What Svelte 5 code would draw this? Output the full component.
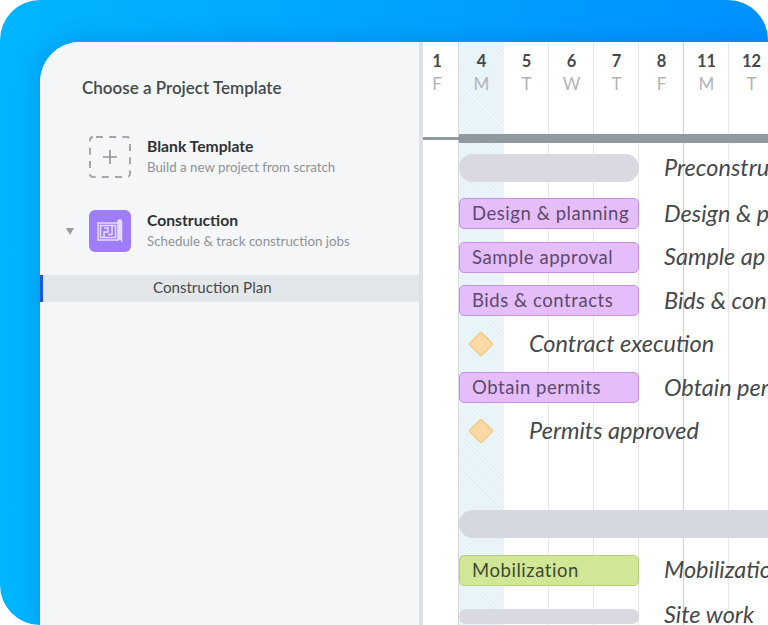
<script>
  const days = [
    { n: '1', d: 'F', first: true },
    { n: '4', d: 'M', today: true },
    { n: '5', d: 'T' },
    { n: '6', d: 'W' },
    { n: '7', d: 'T' },
    { n: '8', d: 'F' },
    { n: '11', d: 'M' },
    { n: '12', d: 'T' }
  ]

  const rows = [
    { type: 'group', label: 'Preconstru' },
    { type: 'task', color: 'purple', name: 'Design & planning', label: 'Design & p' },
    { type: 'task', color: 'purple', name: 'Sample approval', label: 'Sample ap' },
    { type: 'task', color: 'purple', name: 'Bids & contracts', label: 'Bids & con' },
    { type: 'milestone', label: 'Contract execution' },
    { type: 'task', color: 'purple', name: 'Obtain permits', label: 'Obtain per' },
    { type: 'milestone', label: 'Permits approved' },
    { type: 'empty' },
    { type: 'wide' },
    { type: 'task', color: 'green', name: 'Mobilization', label: 'Mobilizatio' },
    { type: 'site', label: 'Site work' }
  ]
</script>

<div class="page">
  <div class="frame">
    <div class="window">
      <aside class="sidebar">
        <h1>Choose a Project Template</h1>

        <div class="template blank">
          <span class="tile">
            <svg width="42" height="42" viewBox="0 0 42 42" fill="none" stroke="#a3a7ab">
              <rect x="1" y="1" width="40" height="40" rx="3" stroke-width="2" stroke-dasharray="7 6.2" stroke-dashoffset="-3" />
              <path d="M21 14v14M14 21h14" stroke-width="1.6" stroke="#8e9296" />
            </svg>
          </span>
          <div class="info">
            <div class="name">Blank Template</div>
            <div class="desc">Build a new project from scratch</div>
          </div>
        </div>

        <div class="template">
          <span class="caret"></span>
          <span class="tile tile-purple">
            <svg width="42" height="42" viewBox="0 0 42 42" fill="none" stroke="#e6dcff" stroke-width="1.6">
              <path d="M9 13h20v17H9zM11.500 15.500h15v12h-15z" />
              <path d="M15 27v-5h4v-4h-4M23 15.500v9h-4" />
              <path d="M29 13v-1.500c0-2 3.500-2 3.500 0V30c-1-1.600-2.500-1.500-3.500 0" fill="#e6dcff" />
            </svg>
          </span>
          <div class="info">
            <div class="name">Construction</div>
            <div class="desc">Schedule &amp; track construction jobs</div>
          </div>
        </div>

        <div class="selected">Construction Plan</div>
      </aside>

      <section class="gantt">
        <div class="columns">
          {#each days as day}
            <div class="col" class:today={day.today} class:first={day.first}></div>
          {/each}
        </div>

        <header class="days">
          {#each days as day}
            <div class="day" class:first={day.first}>
              <b>{day.n}</b>
              <span>{day.d}</span>
            </div>
          {/each}
        </header>

        <div class="rule"><div class="rule-thin"></div><div class="rule-thick"></div></div>

        <div class="rows">
          {#each rows as row}
            <div class="row {row.type}">
              {#if row.type === 'group'}
                <div class="bar pill"></div>
                <em>{row.label}</em>
              {:else if row.type === 'task'}
                <div class="bar {row.color}">{row.name}</div>
                <em>{row.label}</em>
              {:else if row.type === 'milestone'}
                <span class="diamond"></span>
                <em class="near">{row.label}</em>
              {:else if row.type === 'wide'}
                <div class="bar pill stretch"></div>
              {:else if row.type === 'site'}
                <div class="bar pill short"></div>
                <em>{row.label}</em>
              {/if}
            </div>
          {/each}
        </div>
      </section>
    </div>
  </div>
</div>

<style>
  :global(body) {
    margin: 0;
    background: #fff;
  }

  .page {
    width: 768px;
    height: 625px;
    overflow: hidden;
    font-family: Lato, "Open Sans", sans-serif;
  }

  .frame {
    height: 100%;
    box-sizing: border-box;
    padding: 42px 0 0 40px;
    border-radius: 40px 40px 0 40px;
    background: linear-gradient(90deg, #00b5ff 0%, #00a8ff 40%, #0091ff 100%);
  }

  .window {
    display: flex;
    height: 583px;
    background: #fff;
    border-radius: 40px 0 0 0;
    overflow: hidden;
    box-shadow: 0 0 24px rgba(0, 70, 170, 0.28);
  }

  .sidebar {
    width: 379px;
    flex: none;
    background: #f4f6f8;
    border-right: 4px solid #dfe1e2;
  }

  h1 {
    margin: 36px 0 0 42px;
    font-size: 17px;
    line-height: 20px;
    font-weight: 600;
    color: #45494c;
  }

  .template {
    position: relative;
    display: flex;
    align-items: center;
    gap: 16px;
    margin: 0 0 0 49px;
    height: 42px;
  }

  .blank {
    margin-top: 38px;
    margin-bottom: 32px;
  }

  .tile {
    display: block;
    width: 42px;
    height: 42px;
    flex: none;
  }

  .tile-purple {
    background: #a07df8;
    border-radius: 6px;
  }

  .caret {
    position: absolute;
    left: -23px;
    top: 18px;
    border: 4.500px solid transparent;
    border-top: 7px solid #9a9da0;
    border-bottom: 0;
  }

  .info {
    margin-top: -3px;
  }

  .name {
    font-size: 15.700px;
    line-height: 18px;
    font-weight: 700;
    color: #2e3235;
  }

  .desc {
    margin-top: 4px;
    font-size: 13.300px;
    line-height: 16px;
    color: #8f9397;
  }

  .selected {
    margin-top: 23px;
    height: 27px;
    box-sizing: border-box;
    padding-left: 110px;
    line-height: 25px;
    font-size: 15.100px;
    color: #45494c;
    background: #e4e7e9;
    border-left: 3px solid #2156d9;
  }

  .gantt {
    position: relative;
    flex: 1;
    min-width: 0;
    overflow: hidden;
  }

  .columns {
    position: absolute;
    inset: 0;
    display: flex;
  }

  .col {
    width: 45px;
    flex: none;
    box-sizing: border-box;
    border-right: 1px solid #e6e8ea;
  }

  .col.first {
    width: 36px;
    border-right-color: #d5d9dc;
  }

  .col.today {
    background: repeating-linear-gradient(45deg, #e4f1f7 0 1.500px, #edf6fa 1.500px 3px);
    border-right: 0;
  }

  .col:nth-child(6) {
    border-right-color: #cdd1d4;
  }

  .days {
    position: relative;
    display: flex;
    height: 92px;
  }

  .day {
    width: 45px;
    flex: none;
    padding-top: 9px;
    text-align: center;
    box-sizing: border-box;
  }

  .day.first {
    width: 28px;
    margin-right: 8px;
  }

  .day b {
    display: block;
    font-size: 16.500px;
    line-height: 20px;
    font-weight: 700;
    color: #45494c;
  }

  .day span {
    display: block;
    margin-top: 3px;
    font-size: 17px;
    line-height: 20px;
    color: #b0b4b7;
  }

  .rule {
    position: relative;
    display: flex;
    align-items: center;
    height: 9px;
  }

  .rule-thin {
    width: 36px;
    height: 3px;
    background: #8f999f;
  }

  .rule-thick {
    flex: 1;
    height: 9px;
    background: #8f999f;
  }

  .rows {
    position: relative;
    padding: 3px 0 0 36px;
  }

  .row {
    display: flex;
    align-items: center;
    height: 43.500px;
    white-space: nowrap;
  }

  .row.group {
    margin-bottom: 2.500px;
  }

  .row.wide {
    margin-top: 6px;
    margin-bottom: 2.500px;
  }

  .row.site {
    margin-top: 1px;
  }

  .bar {
    width: 180px;
    flex: none;
    box-sizing: border-box;
    height: 31px;
    padding-left: 12px;
    line-height: 29px;
    font-size: 18.500px;
    border-radius: 5px;
    letter-spacing: 0.55px;
    color: #5b4a6a;
  }

  .purple {
    background: #e6bdfb;
    border: 1px solid #c68fe0;
  }

  .green {
    background: #d1e795;
    border: 1px solid #b3d07b;
    color: #3f4a35;
  }

  .pill {
    height: 28px;
    border-radius: 14px;
    background: #d8d9e1;
  }

  .stretch {
    width: 320px;
    border-radius: 14px 0 0 14px;
    background: #d5d8e1;
  }

  .short {
    height: 15px;
    margin-top: 3px;
    border-radius: 7px;
  }

  em {
    margin-left: 25px;
    margin-top: -2px;
    font-size: 23.500px;
    font-style: italic;
    color: #45494c;
  }

  em.near {
    margin-left: 39px;
  }

  .diamond {
    width: 18px;
    height: 18px;
    margin-left: 13px;
    flex: none;
    box-sizing: border-box;
    transform: rotate(45deg);
    background: #fdd9a3;
    border: 1.500px solid #f2bf74;
    border-radius: 2px;
  }
</style>
